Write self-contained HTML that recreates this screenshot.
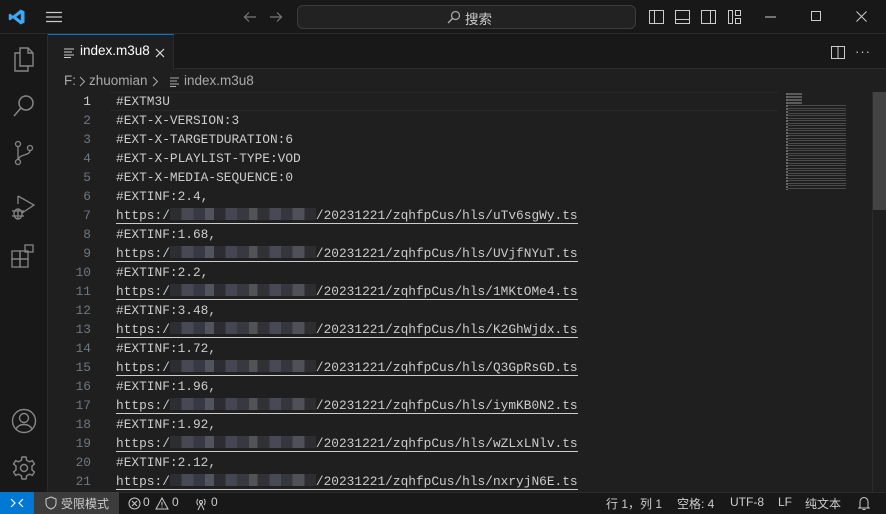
<!DOCTYPE html>
<html><head><meta charset="utf-8"><style>
*{margin:0;padding:0;box-sizing:border-box}
body{width:886px;height:514px;overflow:hidden;background:#1f1f1f;font-family:"Segoe UI","Liberation Sans","Noto Sans CJK SC",sans-serif;color:#ccc;position:relative}
.abs{position:absolute}
#title{left:0;top:0;width:886px;height:34px;background:#181818;border-bottom:1px solid #2b2b2b}
#act{left:0;top:34px;width:48px;height:458px;background:#181818;border-right:1px solid #2b2b2b;overflow:hidden}
#tabs{left:48px;top:34px;width:838px;height:35px;background:#181818;border-bottom:1px solid #2b2b2b}
#tab{left:48px;top:34px;width:126px;height:36px;background:#1f1f1f;border-top:1px solid #0078d4;border-right:1px solid #2b2b2b;font-size:13.5px;color:#fff}
#status{left:0;top:492px;width:886px;height:22px;background:#181818;border-top:1px solid #2b2b2b;font-size:12px;color:#ccc}
.code{font-family:"Liberation Mono",monospace;font-size:12.83px;color:#ccc;white-space:pre}
.ln{position:absolute;left:60px;width:31px;text-align:right;font-family:"Liberation Mono",monospace;font-size:12.83px;color:#6e7681}
.tx{position:absolute;left:116px}
.ul{border-bottom:1px solid #ccc}
.blur{display:inline-block;height:12px;vertical-align:-1px;background:linear-gradient(90deg,#2e3036 0 8%,#4d505c 8% 16%,#3a3d4a 16% 24%,#5b5e68 24% 30%,#2e2e36 30% 38%,#4a4e5a 38% 46%,#3c3c45 46% 54%,#5a5c60 54% 60%,#34343a 60% 68%,#4e525e 68% 76%,#3a3a44 76% 84%,#585a62 84% 92%,#303034 92%);opacity:.85}
svg{position:absolute}
.bc{position:absolute;top:73px;font-size:13.5px;color:#a9a9a9}
</style></head><body>
<div id="title" class="abs">
<svg style="left:8px;top:8px" width="18" height="18" viewBox="0 0 24 24"><path d="M17 2 L22 4.5 V19.5 L17 22 L6.5 13.7 L2.8 16.5 L1 15.6 V8.4 L2.8 7.5 L6.5 10.3 Z M17 7.5 L11 12 L17 16.5Z" fill="#3ba7f5" fill-rule="evenodd"/></svg>
<svg style="left:45px;top:11px" width="18" height="12"><path d="M1 1.5H17M1 6H17M1 10.5H17" stroke="#ccc" stroke-width="1.2"/></svg>
<svg style="left:243px;top:10px" width="14" height="14"><path d="M13 7H1.5M6 2.5L1.5 7L6 11.5" stroke="#777" fill="none" stroke-width="1.2"/></svg>
<svg style="left:269px;top:10px" width="14" height="14"><path d="M1 7H12.5M8 2.5L12.5 7L8 11.5" stroke="#777" fill="none" stroke-width="1.2"/></svg>
<div class="abs" style="left:297px;top:5px;width:339px;height:24px;border:1px solid #3c3c3c;border-radius:6px;background:#222"></div>
<svg style="left:447px;top:10px" width="14" height="14"><circle cx="8.5" cy="5.5" r="4" stroke="#aaa" fill="none" stroke-width="1.2"/><path d="M5.5 8.5L1 13" stroke="#aaa" stroke-width="1.3"/></svg>
<div class="abs" style="left:465px;top:8px;font-size:13.5px;color:#ccc">搜索</div>
<svg style="left:649px;top:10px" width="100" height="14" fill="none" stroke="#ccc" stroke-width="1"><rect x="0.5" y="0.5" width="14" height="13"/><path d="M5.5 1V13"/><rect x="26.5" y="0.5" width="14" height="13"/><path d="M27 9.5H40"/><rect x="52.5" y="0.5" width="14" height="13"/><path d="M61.5 1V13"/><rect x="79.5" y="0.5" width="4" height="13"/><rect x="86.5" y="0.5" width="5" height="5"/><rect x="86.5" y="8.5" width="5" height="5"/></svg>
<svg style="left:765px;top:16px" width="12" height="2"><path d="M0 1H11" stroke="#ccc"/></svg>
<svg style="left:811px;top:11px" width="11" height="11"><rect x="0.5" y="0.5" width="9" height="9" stroke="#ccc" fill="none"/></svg>
<svg style="left:856px;top:11px" width="12" height="12"><path d="M0.5 0.5L10.5 10.5M10.5 0.5L0.5 10.5" stroke="#ccc"/></svg>
</div>
<div id="act" class="abs">
<svg style="left:12px;top:13px" width="24" height="26" fill="none" stroke="#868686" stroke-width="1.4"><path d="M8 1H16L21 6V19H8Z"/><path d="M16 1V6H21"/><path d="M8 6H3V24H16V19"/></svg>
<svg style="left:12px;top:60px" width="24" height="26" fill="none" stroke="#868686" stroke-width="1.5"><circle cx="14" cy="9" r="7"/><path d="M9 14L2 22"/></svg>
<svg style="left:13px;top:106px" width="22" height="28" fill="none" stroke="#868686" stroke-width="1.3"><circle cx="5" cy="4" r="2.5"/><circle cx="17" cy="8" r="2.5"/><circle cx="5" cy="22" r="2.5"/><path d="M5 6.5V19.5M17 10.5C17 16 6 14 5.5 19.5"/></svg>
<svg style="left:10px;top:160px" width="28" height="28" fill="none" stroke="#868686" stroke-width="1.3"><path d="M8 2V10M8 2L24 11L12 19"/><ellipse cx="8" cy="20" rx="4" ry="5"/><path d="M2 17H14M2 22H14M8 15V25"/></svg>
<svg style="left:11px;top:208px" width="26" height="28" fill="none" stroke="#868686" stroke-width="1.3"><rect x="1" y="9" width="8" height="8"/><rect x="9" y="9" width="8" height="8"/><rect x="1" y="17" width="8" height="8"/><rect x="9" y="17" width="8" height="8"/><rect x="14" y="3" width="8" height="7"/></svg>
<svg style="left:11px;top:374px" width="26" height="26" fill="none" stroke="#868686" stroke-width="1.4"><circle cx="13" cy="13" r="11.5"/><circle cx="13" cy="10" r="4.5"/><path d="M5 21C8 15 18 15 21 21"/></svg>
<svg style="left:11px;top:421px" width="26" height="26" fill="none" stroke="#868686" stroke-width="1.4"><circle cx="13" cy="13" r="3.5"/><path d="M11 2H15L15.6 5.2L18.4 6.8L21.4 5.6L23.4 9L21 11.1V14.9L23.4 17L21.4 20.4L18.4 19.2L15.6 20.8L15 24H11L10.4 20.8L7.6 19.2L4.6 20.4L2.6 17L5 14.9V11.1L2.6 9L4.6 5.6L7.6 6.8L10.4 5.2Z"/></svg>
</div>
<div id="tabs" class="abs"></div>
<div id="tab" class="abs">
<svg style="left:16px;top:13px" width="12" height="10"><path d="M0 1H10M0 4H8M0 7H10M0 9.5H7" stroke="#ccc" stroke-width="1.1"/></svg>
<div class="abs" style="left:32px;top:8px">index.m3u8</div>
<svg style="left:107px;top:13px" width="10" height="10"><path d="M1 1L9 9M9 1L1 9" stroke="#ddd" stroke-width="1.2"/></svg>
</div>
<svg style="left:831px;top:46px" width="14" height="13"><rect x="0.5" y="0.5" width="13" height="12" stroke="#ccc" fill="none"/><path d="M7 1V12" stroke="#ccc"/></svg>
<div class="abs" style="left:855px;top:44px;font-size:13px;color:#ccc;letter-spacing:1px">···</div>
<div class="bc" style="left:64px">F:</div>
<svg style="left:79px;top:76px" width="7" height="11"><path d="M1 1L5.5 5.5L1 10" stroke="#aaa" fill="none"/></svg>
<div class="bc" style="left:89px">zhuomian</div>
<svg style="left:152px;top:76px" width="7" height="11"><path d="M1 1L5.5 5.5L1 10" stroke="#aaa" fill="none"/></svg>
<svg style="left:170px;top:77px" width="10" height="10"><path d="M0 1H9M0 4H7M0 7H9M0 9.5H6" stroke="#aaa" stroke-width="1.1"/></svg>
<div class="bc" style="left:184px">index.m3u8</div>
<div class="abs" style="left:110px;top:92px;width:668px;height:19px;border-top:1px solid #282828;border-bottom:1px solid #282828"></div>
<!-- minimap -->
<div class="abs" style="left:786px;top:92px;width:2px;height:98px;background:repeating-linear-gradient(#1f1f1f 0 1px,#666 1px 3px)"></div>
<div class="abs" style="left:788px;top:92px;width:14px;height:14px;background:repeating-linear-gradient(#1f1f1f 0 1px,#5a5a5a 1px 3px)"></div>
<div class="abs" style="left:788px;top:104px;width:58px;height:86px;background:repeating-linear-gradient(#1f1f1f 0 1px,#4a4a4a 1px 2px,#1f1f1f 2px 4px,#4a4a4a 4px 5px)"></div>
<div class="abs" style="left:873px;top:92px;width:13px;height:118px;background:#434343"></div>
<div class="abs" style="left:872px;top:92px;width:1px;height:400px;background:#2b2b2b"></div>
<div class="code">
<div class="ln" style="top:94px;color:#ccc">1</div><div class="tx" style="top:94px">#EXTM3U</div>
<div class="ln" style="top:113px">2</div><div class="tx" style="top:113px">#EXT-X-VERSION:3</div>
<div class="ln" style="top:132px">3</div><div class="tx" style="top:132px">#EXT-X-TARGETDURATION:6</div>
<div class="ln" style="top:151px">4</div><div class="tx" style="top:151px">#EXT-X-PLAYLIST-TYPE:VOD</div>
<div class="ln" style="top:170px">5</div><div class="tx" style="top:170px">#EXT-X-MEDIA-SEQUENCE:0</div>
<div class="ln" style="top:189px">6</div><div class="tx" style="top:189px">#EXTINF:2.4,</div>
<div class="ln" style="top:208px">7</div><div class="tx ul" style="top:208px">https:/<span class="blur" style="width:146px"></span>/20231221/zqhfpCus/hls/uTv6sgWy.ts</div>
<div class="ln" style="top:227px">8</div><div class="tx" style="top:227px">#EXTINF:1.68,</div>
<div class="ln" style="top:246px">9</div><div class="tx ul" style="top:246px">https:/<span class="blur" style="width:146px"></span>/20231221/zqhfpCus/hls/UVjfNYuT.ts</div>
<div class="ln" style="top:265px">10</div><div class="tx" style="top:265px">#EXTINF:2.2,</div>
<div class="ln" style="top:284px">11</div><div class="tx ul" style="top:284px">https:/<span class="blur" style="width:146px"></span>/20231221/zqhfpCus/hls/1MKtOMe4.ts</div>
<div class="ln" style="top:303px">12</div><div class="tx" style="top:303px">#EXTINF:3.48,</div>
<div class="ln" style="top:322px">13</div><div class="tx ul" style="top:322px">https:/<span class="blur" style="width:146px"></span>/20231221/zqhfpCus/hls/K2GhWjdx.ts</div>
<div class="ln" style="top:341px">14</div><div class="tx" style="top:341px">#EXTINF:1.72,</div>
<div class="ln" style="top:360px">15</div><div class="tx ul" style="top:360px">https:/<span class="blur" style="width:146px"></span>/20231221/zqhfpCus/hls/Q3GpRsGD.ts</div>
<div class="ln" style="top:379px">16</div><div class="tx" style="top:379px">#EXTINF:1.96,</div>
<div class="ln" style="top:398px">17</div><div class="tx ul" style="top:398px">https:/<span class="blur" style="width:146px"></span>/20231221/zqhfpCus/hls/iymKB0N2.ts</div>
<div class="ln" style="top:417px">18</div><div class="tx" style="top:417px">#EXTINF:1.92,</div>
<div class="ln" style="top:436px">19</div><div class="tx ul" style="top:436px">https:/<span class="blur" style="width:146px"></span>/20231221/zqhfpCus/hls/wZLxLNlv.ts</div>
<div class="ln" style="top:455px">20</div><div class="tx" style="top:455px">#EXTINF:2.12,</div>
<div class="ln" style="top:474px">21</div><div class="tx ul" style="top:474px">https:/<span class="blur" style="width:146px"></span>/20231221/zqhfpCus/hls/nxryjN6E.ts</div>
</div>
<div id="status" class="abs">
<div class="abs" style="left:0;top:-1px;width:34px;height:22px;background:#0078d4"></div>
<svg style="left:10px;top:4px" width="14" height="12"><path d="M1 10L5 6L1 2M13 2L9 6L13 10" stroke="#fff" fill="none" stroke-width="1.2"/></svg>
<div class="abs" style="left:34px;top:-1px;width:85px;height:22px;background:#3c3c3c"></div>
<svg style="left:45px;top:3px" width="12" height="14"><path d="M6 1L11 3V7C11 10 9 12 6 13C3 12 1 10 1 7V3Z" stroke="#ccc" fill="none"/></svg>
<div class="abs" style="left:61px;top:2px">受限模式</div>
<svg style="left:128px;top:4px" width="13" height="13"><circle cx="6.5" cy="6.5" r="5.5" stroke="#ccc" fill="none"/><path d="M4 4L9 9M9 4L4 9" stroke="#ccc"/></svg>
<div class="abs" style="left:143px;top:2px">0</div>
<svg style="left:155px;top:4px" width="14" height="13"><path d="M7 1L13 12H1Z" stroke="#ccc" fill="none"/><path d="M7 5V8.5M7 9.5V10.5" stroke="#ccc"/></svg>
<div class="abs" style="left:172px;top:2px">0</div>
<svg style="left:194px;top:4px" width="14" height="14"><circle cx="7" cy="5" r="1.5" stroke="#ccc" fill="none"/><path d="M4 2C2.5 3.5 2.5 6.5 4 8M10 2C11.5 3.5 11.5 6.5 10 8M7 6.5L4 13M7 6.5L10 13" stroke="#ccc" fill="none"/></svg>
<div class="abs" style="left:211px;top:2px">0</div>
<div class="abs" style="left:606px;top:2px">行 1，列 1</div>
<div class="abs" style="left:677px;top:2px">空格: 4</div>
<div class="abs" style="left:730px;top:2px">UTF-8</div>
<div class="abs" style="left:778px;top:2px">LF</div>
<div class="abs" style="left:805px;top:2px">纯文本</div>
<svg style="left:858px;top:3px" width="12" height="15"><path d="M2 11V6C2 3 4 1.5 6 1.5C8 1.5 10 3 10 6V11L11 12H1Z" stroke="#ccc" fill="none"/><path d="M4.5 13.5H7.5" stroke="#ccc"/></svg>
</div>
</body></html>
